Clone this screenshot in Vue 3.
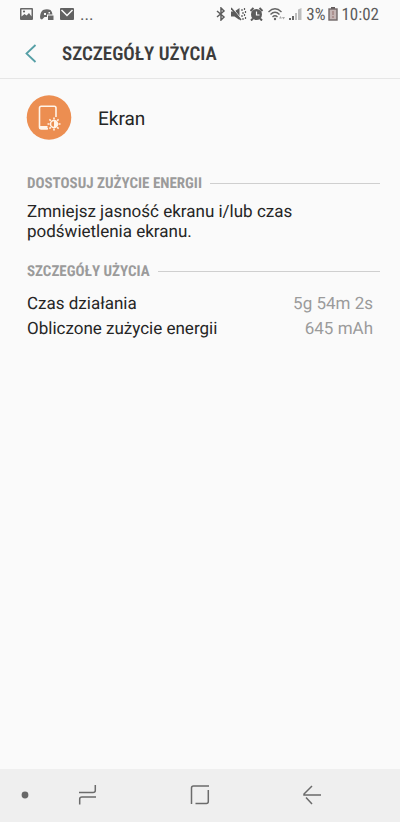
<script setup>
const details = [
  { label: 'Czas działania', value: '5g 54m 2s' },
  { label: 'Obliczone zużycie energii', value: '645 mAh' },
]
</script>

<template>
  <div class="screen">
    <div class="status">
      <div class="status-left">
        <svg width="14" height="14" viewBox="0 0 14 14" aria-hidden="true">
          <path fill="#686868" fill-rule="evenodd" d="M1 1h11q1 0 1 1v10q0 1-1 1H1q-1 0-1-1V2q0-1 1-1zM1.500 2.500v7L4.500 7l2 1.500L9 6l2.500 3.500v-7z" />
          <circle cx="4" cy="4.500" r="1.100" fill="#686868" />
        </svg>
        <svg width="14" height="14" viewBox="0 0 14 14" aria-hidden="true">
          <path fill="#686868" fill-rule="evenodd" d="M3 3Q7 1.500 10.500 3q1.700 1.500 2 4.500H7V10H4.500L2 12.500Q0 12.500 0 10 .3 5 3 3zM4 6v2h2V6zM8.500 5v1.500H10V5z" />
          <path fill="#686868" d="M8 8.500h5.500v4.500H8z" />
        </svg>
        <svg width="14" height="14" viewBox="0 0 14 14" aria-hidden="true">
          <rect y="1" width="14" height="12" rx="1" fill="#616161" />
          <path d="M1.500 3 7 8.500 12.500 3" fill="none" stroke="#fafafa" stroke-width="1.500" />
        </svg>
        <span class="dots">...</span>
      </div>
      <div class="status-right">
        <svg width="12" height="14" viewBox="0 0 12 14" aria-hidden="true">
          <path d="M1 4l7 6-3 3V1l3 3-7 6" fill="none" stroke="#5c5c5c" stroke-width="1.500" />
        </svg>
        <svg width="16" height="14" viewBox="0 0 16 14" aria-hidden="true">
          <path fill="#5c5c5c" d="M0 4.500h3.500L8.500 1v12L3.500 9.500H0z" />
          <path d="M1 .5l10 12" stroke="#fafafa" /><path d="M0 1l10 12" stroke="#5c5c5c" stroke-width="1.500" />
          <path d="M11 2v2M12 5v2M11 8v2M12 11v2M13.500 1v2M14.500 4v2M13.500 7v2M14.500 10v2" fill="none" stroke="#5c5c5c" stroke-width="1.200" />
        </svg>
        <svg width="15" height="14" viewBox="0 0 15 14" aria-hidden="true">
          <circle cx="6.500" cy="7.500" r="5.500" fill="#5c5c5c" />
          <path d="M.5 4 3.500 1M9.500 1l3 3M3 11.500l-2 2M10 11.500l2 2" stroke="#5c5c5c" stroke-width="2" />
          <path d="M6.500 4.500V8h3" fill="none" stroke="#fafafa" stroke-width="1.200" />
        </svg>
        <svg width="18" height="14" viewBox="0 0 18 14" aria-hidden="true">
          <g fill="none" stroke="#666" stroke-width="1.400"><path d="M.5 5Q7-1.500 13.500 5M2.500 7.500q4.500-4.500 9 0M4.500 10q2.500-2.500 5 0" /></g>
          <circle cx="7" cy="12" r="1.200" fill="#666" />
          <path d="M11 11.500l1.500-2.500 1.500 2.500zM14 10h3l-1.500 2.500z" fill="#aaa" />
        </svg>
        <svg width="14" height="14" viewBox="0 0 14 14" aria-hidden="true">
          <path d="M0 11h2v2H0zM3 9h2v4H3z" fill="#666" /><path d="M6 6h2v7H6zM9 2.500 12.500 1v12H9z" fill="#bdbdbd" />
        </svg>
        <span class="percent">3%</span>
        <svg width="10" height="14" viewBox="0 0 10 14" aria-hidden="true">
          <path d="M3 0h4v2H3z" fill="#625b5b" /><rect x="1" y="2" width="8" height="11" fill="#c5b5b4" stroke="#706767" stroke-width="1.400" />
          <path d="M5 4v4M5 9v2" stroke="#9d7a77" stroke-width="1.200" />
        </svg>
        <span class="clock">10:02</span>
      </div>
    </div>

    <header class="bar">
      <button class="back" type="button" aria-label="Wstecz">
        <svg width="12" height="20" viewBox="0 0 12 20" aria-hidden="true"><path d="M10.500 1 1.500 9.500l9 8.500" fill="none" stroke="#559fa6" stroke-width="1.800" /></svg>
      </button>
      <h1>SZCZEGÓŁY UŻYCIA</h1>
    </header>

    <main>
      <div class="item">
        <svg width="46" height="46" viewBox="0 0 46 46" aria-hidden="true">
          <circle cx="23" cy="22.500" r="22.300" fill="#ec8e51" />
          <path d="M30 22V13q0-1.700-1.700-1.700H15.200q-1.700 0-1.700 1.700v19q0 1.700 1.700 1.700H22" fill="none" stroke="#fff4e9" stroke-width="1.600" />
          <path d="M13 31h8.500v3.500H15q-2 0-2-2z" fill="#fff4e9" />
          <circle cx="28" cy="29" r="4.500" fill="#ec8e51" />
          <circle cx="28" cy="29" r="3.500" fill="none" stroke="#fff4e9" stroke-width="1.500" />
          <path d="M28 25.500a3.500 3.500 0 0 1 0 7z" fill="#fff4e9" />
          <path d="M28 22.500v2M28 33.500v2M21.500 29h2M32.500 29h2M23.400 24.400l1.400 1.400M31.200 32.200l1.400 1.400M23.400 33.600l1.400-1.400M31.200 25.800l1.400-1.400" stroke="#fff4e9" stroke-width="1.600" />
        </svg>
        <span>Ekran</span>
      </div>

      <section>
        <h2>DOSTOSUJ ZUŻYCIE ENERGII</h2>
        <p>Zmniejsz jasność ekranu i/lub czas podświetlenia ekranu.</p>
      </section>

      <section>
        <h2>SZCZEGÓŁY UŻYCIA</h2>
        <dl>
          <div v-for="d in details" :key="d.label">
            <dt>{{ d.label }}</dt>
            <dd>{{ d.value }}</dd>
          </div>
        </dl>
      </section>
    </main>

    <nav>
      <button type="button" aria-label="Pasek nawigacji"><svg width="8" height="20" viewBox="0 0 8 20" aria-hidden="true"><circle cx="4" cy="10" r="3.400" fill="#686868" /></svg></button>
      <button type="button" aria-label="Ostatnie"><svg width="20" height="20" viewBox="0 0 20 20" aria-hidden="true"><path d="M1 7.500h14q2.300 0 2.300-2V0M18 12H4q-2.300 0-2.300 2v5.500" fill="none" stroke="#6b6b6b" stroke-width="1.500" /></svg></button>
      <button type="button" aria-label="Ekran główny"><svg width="20" height="20" viewBox="0 0 20 20" aria-hidden="true"><path d="M1.500 19V3q0-2 2-2H19M18.300 5v11.500q0 2-2 2H5.500" fill="none" stroke="#6b6b6b" stroke-width="1.500" /></svg></button>
      <button type="button" aria-label="Wstecz"><svg width="20" height="20" viewBox="0 0 20 20" aria-hidden="true"><path d="M10 1 2 9v1h17M4 12.500l6 6.500" fill="none" stroke="#6b6b6b" stroke-width="1.500" /></svg></button>
    </nav>
  </div>
</template>

<style>
body { background: #fafafa; }
</style>

<style scoped>
.screen {
  min-height: 100vh;
  display: flex;
  flex-direction: column;
  background: #fafafa;
  color: #252525;
  font-family: Roboto, sans-serif;
  text-rendering: geometricPrecision;
}
svg { display: block; flex: none; }
button { border: 0; background: none; padding: 0; display: flex; align-items: center; }
h1, h2, p, dl, dd { margin: 0; }
.status {
  height: 28px;
  display: flex;
  justify-content: space-between;
  align-items: center;
  padding: 1px 21px 1px 20px;
  font-family: "Roboto Condensed", Roboto, sans-serif;
  font-size: 17px;
  color: #5c5c5c;
}
.status-left { display: flex; align-items: center; gap: 6px; }
.status-right { display: flex; align-items: center; gap: 3px; }
.status-left > svg, .status-right > svg { margin-bottom: 2px; }
.dots { line-height: 20px; }
.bar {
  height: 48px;
  display: flex;
  align-items: center;
  padding-left: 25px;
  border-bottom: 1px solid #e6e6e6;
}
.back { width: 37px; height: 48px; }
h1 {
  font-family: "Roboto Condensed", Roboto, sans-serif;
  font-size: 19px;
  line-height: 24px;
  font-weight: 600;
  color: #3c3c3c;
}
main { flex: 1; padding: 16px 20px 16px 26px; }
.item { display: flex; align-items: center; gap: 26px; font-size: 19px; }
section { padding-left: 1px; }
h2 {
  display: flex;
  align-items: center;
  gap: 8px;
  font-family: "Roboto Condensed", Roboto, sans-serif;
  font-size: 15px;
  line-height: 20px;
  font-weight: 700;
  color: #9b9b9b;
}
h2::after { content: ""; flex: 1; height: 1px; background: #cfcfcf; }
section { margin-top: 32px; }
section + section { margin-top: 19px; }
p { margin-top: 9px; max-width: 290px; font-size: 17px; line-height: 20px; }
dl { margin-top: 11px; padding-right: 7px; font-size: 17px; line-height: 25px; }
dl div { display: flex; justify-content: space-between; }
dd { color: #9b9b9b; }
nav {
  height: 53px;
  display: grid;
  grid-template-columns: 32fr 112fr 112fr 112fr 32fr;
  align-items: center;
  background: #efefef;
}
nav button { justify-content: center; height: 53px; padding-bottom: 2px; }
nav button:first-child { justify-content: flex-end; padding-right: 3px; }
</style>
